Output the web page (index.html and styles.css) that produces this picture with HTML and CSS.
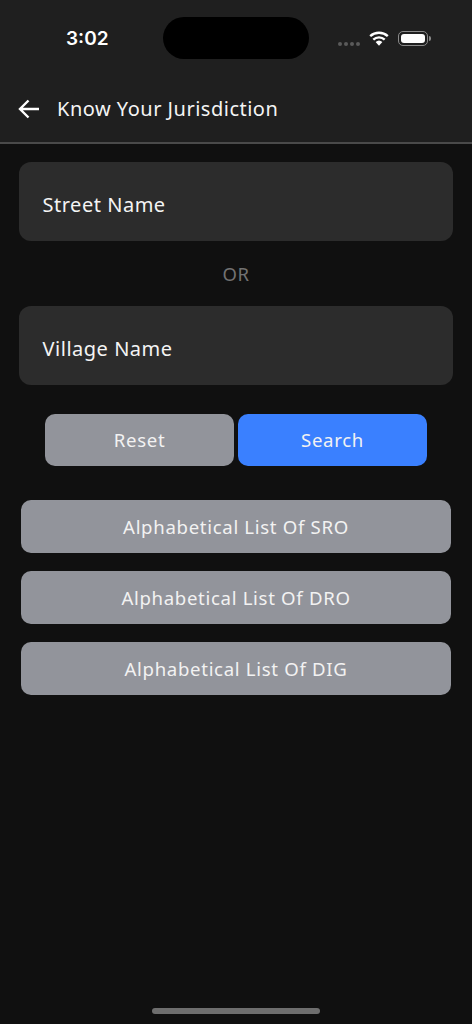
FILE: index.html
```html
<!DOCTYPE html>
<html lang="en">
<head>
    <meta charset="UTF-8">
    <meta name="viewport" content="width=device-width, initial-scale=1.0">
    <title>Know Your Jurisdiction</title>
    <link rel="stylesheet" href="styles.css">
</head>
<body>

    <div class="screen">
        <div class="top">
            <!-- Status bar -->
            <div class="status">
                <span class="time">3:02</span>
                <div class="island"></div>
                <div class="status-icons">
                    <div class="dots"><i></i><i></i><i></i><i></i></div>
                    <svg class="wifi" width="20" height="15" viewBox="0 0 20 15">
                        <path d="M10 14.8 L6.6 11 A5 5 0 0 1 13.4 11 Z" fill="#fff"/>
                        <path d="M4.3 8.6 A8.4 8.4 0 0 1 15.7 8.6" fill="none" stroke="#fff" stroke-width="2.4"/>
                        <path d="M1.2 5.2 A13 13 0 0 1 18.8 5.2" fill="none" stroke="#fff" stroke-width="2.4"/>
                    </svg>
                    <div class="battery"><div class="battery-fill"></div></div>
                    <div class="battery-cap"></div>
                </div>
            </div>
            <!-- Title bar -->
            <div class="title-bar">
                <svg class="back" width="22" height="20" viewBox="0 0 22 20">
                    <path d="M21 10 H2.5 M10.5 1.5 L2 10 L10.5 18.5" fill="none" stroke="#fff" stroke-width="2.4"/>
                </svg>
                <h1>Know Your Jurisdiction</h1>
            </div>
        </div>

        <div class="content">
            <div class="field">Street Name</div>
            <div class="or">OR</div>
            <div class="field">Village Name</div>

            <div class="actions">
                <button class="btn reset">Reset</button>
                <button class="btn search">Search</button>
            </div>

            <div class="lists">
                <button class="btn list-btn">Alphabetical List Of SRO</button>
                <button class="btn list-btn">Alphabetical List Of DRO</button>
                <button class="btn list-btn">Alphabetical List Of DIG</button>
            </div>
        </div>

        <div class="home-bar"></div>
    </div>

</body>
</html>
```

FILE: styles.css
```css
* {
    box-sizing: border-box;
}
html, body {
    margin: 0;
    padding: 0;
}
body {
    background-color: #101010;
    font-family: "Noto Sans", sans-serif;
    color: #fff;
}
.screen {
    width: 472px;
    height: 1024px;
    display: flex;
    flex-direction: column;
    overflow: hidden;
}
.top {
    height: 144px;
    background-color: #1f1f1f;
    border-bottom: 2px solid #4a4a4a;
}
.status {
    height: 76px;
    display: flex;
    align-items: flex-start;
    padding-top: 17px;
}
.time {
    width: 163px;
    padding: 9px 0 0 66px;
    font-family: Inter, sans-serif;
    font-size: 19px;
    line-height: 26px;
    font-weight: 600;
}
.island {
    width: 146px;
    height: 42px;
    border-radius: 21px;
    background-color: #000;
}
.status-icons {
    display: flex;
    align-items: center;
    height: 44px;
    margin-left: 29px;
}
.dots {
    display: flex;
    gap: 2px;
    margin-top: 10px;
    margin-right: 9px;
}
.dots i {
    width: 4px;
    height: 4px;
    border-radius: 50%;
    background-color: #5a5a5a;
}
.wifi {
    margin-top: -2px;
    margin-right: 9px;
}
.battery {
    width: 30px;
    height: 15px;
    padding: 2px;
    border: 1px solid #8a8a8a;
    border-radius: 5px;
    margin-top: -1px;
}
.battery-fill {
    width: 100%;
    height: 100%;
    background-color: #fff;
    border-radius: 3px;
}
.battery-cap {
    width: 2px;
    height: 5px;
    margin-left: 1px;
    margin-top: -1px;
    background-color: #8a8a8a;
    border-radius: 0 2px 2px 0;
}
.title-bar {
    height: 66px;
    display: flex;
    align-items: center;
    padding-left: 18px;
}
.back {
    flex-shrink: 0;
}
h1 {
    margin: 0 0 0 17px;
    font-size: 20px;
    line-height: 28px;
    font-weight: 400;
    letter-spacing: 0.5px;
    color: #f4f4f4;
}
.content {
    flex: 1;
    display: flex;
    flex-direction: column;
    padding: 18px 19px 0;
}
.field {
    height: 79px;
    padding: 5px 0 0 23.5px;
    display: flex;
    align-items: center;
    background-color: #2c2c2c;
    border-radius: 12px;
    font-size: 20px;
    letter-spacing: 0.52px;
    color: #f4f4f4;
}
.or {
    height: 65px;
    display: flex;
    align-items: center;
    justify-content: center;
    color: #727272;
    font-size: 18.5px;
    letter-spacing: 0.5px;
}
.btn {
    border: none;
    color: #f2f2f2;
    font-family: inherit;
    font-size: 18.6px;
    letter-spacing: 0.68px;
    cursor: pointer;
    background-color: #92949b;
}
.actions {
    display: flex;
    gap: 4px;
    margin: 29px 26px 0;
}
.actions .btn {
    width: 189px;
    height: 52px;
    padding-bottom: 2px;
    border-radius: 10px;
}
.search {
    background-color: #3a80ff;
}
.lists {
    display: flex;
    flex-direction: column;
    gap: 18px;
    margin: 34px 2px 0;
}
.list-btn {
    height: 53px;
    padding-bottom: 2px;
    border-radius: 10px;
}
.home-bar {
    width: 168px;
    height: 6px;
    margin: 0 auto 10px;
    border-radius: 3px;
    background-color: #6e6e6e;
}
```
